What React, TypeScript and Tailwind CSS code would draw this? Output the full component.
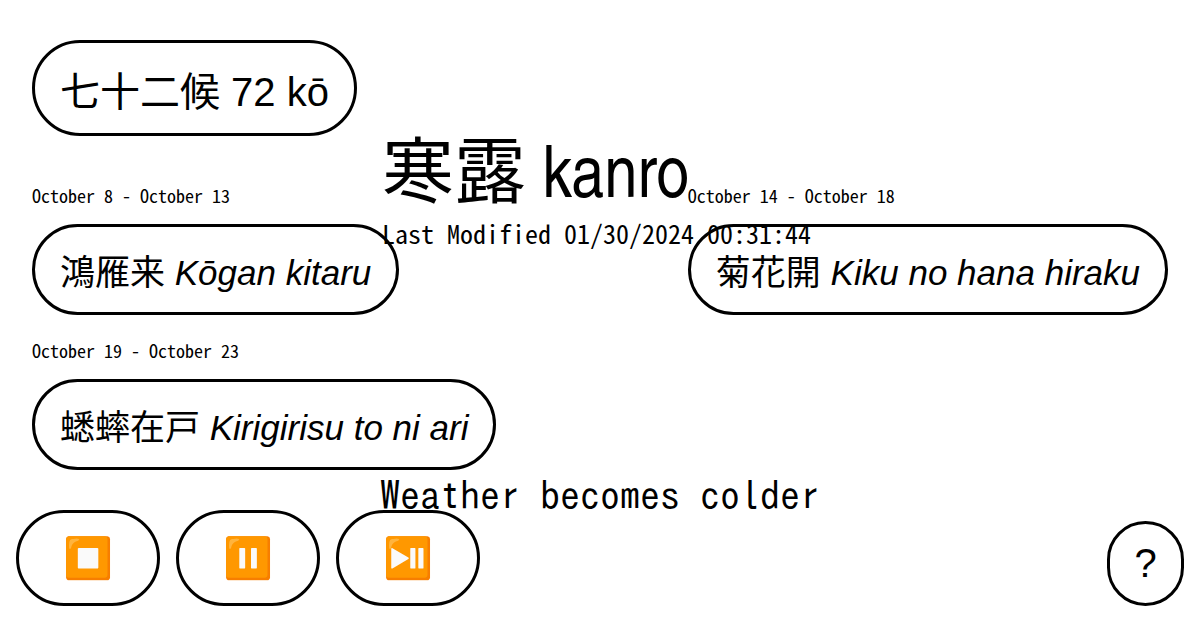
const mono = "font-['Noto_Sans_Mono_CJK_JP',monospace]";
const pill =
  "rounded-full border-3 border-black font-['Liberation_Sans','Noto_Sans_CJK_JP',sans-serif] whitespace-nowrap";

type Ko = { dates: string; kanji: string; romaji: string };

const kos: Ko[] = [
  { dates: 'October 8 - October 13', kanji: '鴻雁来', romaji: 'Kōgan kitaru' },
  { dates: 'October 14 - October 18', kanji: '菊花開', romaji: 'Kiku no hana hiraku' },
  { dates: 'October 19 - October 23', kanji: '蟋蟀在戸', romaji: 'Kirigirisu to ni ari' },
];

const controls = [
  { label: 'Stop', glyph: '⏹️' },
  { label: 'Pause', glyph: '⏸️' },
  { label: 'Play or pause', glyph: '⏯️' },
];

function KoItem({ dates, kanji, romaji }: Ko) {
  return (
    <section>
      <p className={`${mono} text-[18px] leading-[22px]`}>{dates}</p>
      <button type="button" className={`${pill} mt-[18px] px-[25px] pt-[27px] pb-[21px] text-[35px] leading-[37px]`}>
        {kanji} <i>{romaji}</i>
      </button>
    </section>
  );
}

export default function App() {
  return (
    <main className="relative flex min-h-screen flex-col bg-white text-black">
      <div className="px-8 pt-10">
        <button type="button" className={`${pill} px-[25px] pt-7 pb-5 text-[40px] leading-[42px]`}>
          七十二候 72 kō
        </button>
      </div>

      <div className="mt-12 flex flex-wrap justify-between gap-y-6 px-8">
        {kos.map((ko) => (
          <KoItem key={ko.dates} {...ko} />
        ))}
      </div>

      <footer className="mt-auto flex items-end justify-between px-4 pb-6">
        <div className="flex gap-4">
          {controls.map(({ label, glyph }) => (
            <button
              key={label}
              type="button"
              aria-label={label}
              className={`${pill} w-36 py-6 text-[40px] leading-[42px]`}
            >
              {glyph}
            </button>
          ))}
        </div>
        <button type="button" aria-label="Help" className={`${pill} w-[77px] py-[18px] text-[40px] leading-[43px]`}>
          ?
        </button>
      </footer>

      <div className="pointer-events-none absolute inset-0 flex flex-col items-center justify-between pt-[124px] pb-[111px]">
        <header className="min-w-[436px]">
          <h1 className="font-['TeX_Gyre_Heros_Cn','Noto_Sans_CJK_JP',sans-serif] text-[72px] leading-[88px]">
            寒露 kanro
          </h1>
          <p className={`${mono} text-[26px] leading-[42px]`}>Last Modified 01/30/2024 00:31:44</p>
        </header>
        <p className="font-['IPAGothic','Noto_Sans_Mono_CJK_JP',monospace] text-[40px] leading-[48px]">
          Weather becomes colder
        </p>
      </div>
    </main>
  );
}
